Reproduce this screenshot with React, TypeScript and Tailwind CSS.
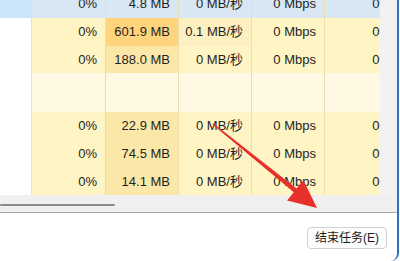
// Task manager process list — bottom-right corner with "end task" button

const BASE = "bg-[#fff4c4]";
const MEM = "bg-[#fbe8a8]";
const HOT = "bg-[#ffd47c]";
const SEL = "bg-[#d8e7f3]";
const HEAD = "bg-[#fff9e4]";

type Cell = { text: string; bg: string };

function Row({ h, name, cells }: { h: string; name: string; cells: Cell[] }) {
  return (
    <div className={`grid grid-cols-[32px_74px_73px_73px_73px_75px] ${h}`}>
      <div className={`${name} border-r border-[#efe3bb]`} />
      {cells.map((c, i) => (
        <div
          key={i}
          className={`${c.bg} flex items-center justify-end pr-2 border-r border-[#ecdcae] whitespace-nowrap`}
        >
          {c.text}
        </div>
      ))}
    </div>
  );
}

const cellsOf = (vals: string[], bgs: string[]): Cell[] =>
  vals.map((text, i) => ({ text, bg: bgs[i] }));

export default function App() {
  return (
    <div className="w-[400px] h-[261px] bg-white overflow-hidden relative text-[13px] text-[#1f1f1f] font-['Liberation_Sans','Noto_Sans_CJK_SC',sans-serif]">
      <div className="w-[399px] h-[261px] flex flex-col border-r-2 border-[#3470bd] rounded-br-[8px] overflow-hidden">
        {/* Table + vertical scrollbar */}
        <div className="flex h-[195px]">
          <div className="w-[380px] h-[195px] overflow-hidden">
            <div className="w-[400px] -mt-[10px]">
              <Row
                h="h-7"
                name="bg-[#cce4f9]"
                cells={cellsOf(["0%", "4.8 MB", "0 MB/秒", "0 Mbps", "0%"], [SEL, SEL, SEL, SEL, SEL])}
              />
              <Row
                h="h-7"
                name="bg-white"
                cells={cellsOf(["0%", "601.9 MB", "0.1 MB/秒", "0 Mbps", "0%"], [BASE, HOT, "bg-[#fcf0c0]", BASE, BASE])}
              />
              <Row
                h="h-[27px]"
                name="bg-white"
                cells={cellsOf(["0%", "188.0 MB", "0 MB/秒", "0 Mbps", "0%"], [BASE, MEM, BASE, BASE, BASE])}
              />
              <Row
                h="h-[39px]"
                name="bg-white"
                cells={cellsOf(["", "", "", "", ""], [HEAD, HEAD, HEAD, HEAD, HEAD])}
              />
              <Row
                h="h-7"
                name="bg-white"
                cells={cellsOf(["0%", "22.9 MB", "0 MB/秒", "0 Mbps", "0%"], [BASE, MEM, BASE, BASE, BASE])}
              />
              <Row
                h="h-7"
                name="bg-white"
                cells={cellsOf(["0%", "74.5 MB", "0 MB/秒", "0 Mbps", "0%"], [BASE, MEM, BASE, BASE, BASE])}
              />
              <Row
                h="h-7"
                name="bg-white"
                cells={cellsOf(["0%", "14.1 MB", "0 MB/秒", "0 Mbps", "0%"], [BASE, MEM, BASE, BASE, BASE])}
              />
            </div>
          </div>
          <div className="flex-1 bg-[#f2f2f2]" />
        </div>

        {/* Horizontal scrollbar */}
        <div className="h-[18px] bg-[#f0f0f0] border-b border-[#a8a8a8] pt-[9px]">
          <div className="w-[115px] h-[2px] rounded-full bg-[#8a8a8a]" />
        </div>

        {/* Footer */}
        <div className="flex-1 flex justify-end items-start pt-[14px] pr-[10px]">
          <button className="h-[22px] px-[7px] rounded-[4px] border border-[#d0d0d0] bg-[#fdfdfd] text-[12px] leading-none text-[#1a1a1a]">
            结束任务(E)
          </button>
        </div>
      </div>

      {/* Annotation arrow */}
      <svg className="absolute inset-0 pointer-events-none" width="400" height="261" viewBox="0 0 400 261">
        <polygon
          points="212.5,124.6 293.8,192.2 287,200.5 317,208 303.4,180.3 296.6,188.6 213.5,123.4"
          fill="#e8302a"
        />
      </svg>
    </div>
  );
}
